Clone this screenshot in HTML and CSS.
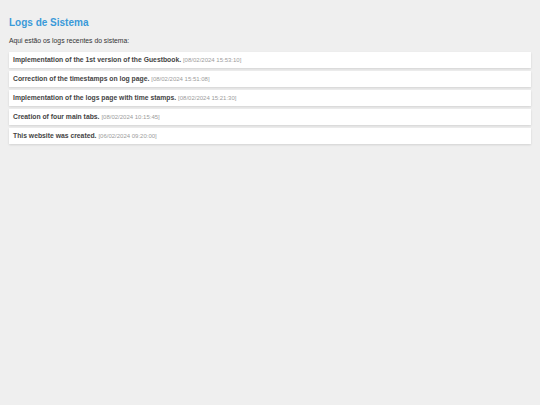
FILE: index.html
```html
<!DOCTYPE html>
<html lang="pt">
<head>
    <meta charset="UTF-8">
    <meta name="viewport" content="width=device-width, initial-scale=1.0">
    <title>Logs de Sistema</title>
    <link rel="stylesheet" href="styles.css">
</head>
<body>
    <div class="container">
        <h1 class="page-title">Logs de Sistema</h1>
        <p class="page-subtitle">Aqui estão os logs recentes do sistema:</p>

        <ul class="log-list">
            <li class="log-item">
                <strong>Implementation of the 1st version of the Guestbook.</strong>
                <span class="log-time">[08/02/2024 15:53:10]</span>
            </li>
            <li class="log-item">
                <strong>Correction of the timestamps on log page.</strong>
                <span class="log-time">[08/02/2024 15:51:08]</span>
            </li>
            <li class="log-item">
                <strong>Implementation of the logs page with time stamps.</strong>
                <span class="log-time">[08/02/2024 15:21:30]</span>
            </li>
            <li class="log-item">
                <strong>Creation of four main tabs.</strong>
                <span class="log-time">[08/02/2024 10:15:45]</span>
            </li>
            <li class="log-item">
                <strong>This website was created.</strong>
                <span class="log-time">[06/02/2024 09:20:00]</span>
            </li>
        </ul>
    </div>
</body>
</html>
```

FILE: styles.css
```css
* {
    margin: 0;
    padding: 0;
    box-sizing: border-box;
}

body {
    font-family: "Liberation Sans", Arial, sans-serif;
    background-color: #efefef;
    color: #333;
}

.container {
    padding: 17px 9px;
}

.page-title {
    font-size: 10px;
    font-weight: 700;
    color: #3a9ad9;
    margin-bottom: 9px;
}

.page-subtitle {
    font-size: 6.8px;
    color: #333;
    margin-bottom: 7.5px;
}

/* Log entries */
.log-list {
    list-style: none;
}

.log-item {
    background: #fff;
    height: 16px;
    padding: 4.5px 4px;
    margin-bottom: 3px;
    font-size: 6.8px;
    line-height: 7px;
    box-shadow: 0 1px 2px rgba(0, 0, 0, 0.12);
}

.log-item strong {
    color: #444;
}

.log-time {
    color: #9c9c9c;
    font-size: 6px;
}
```
